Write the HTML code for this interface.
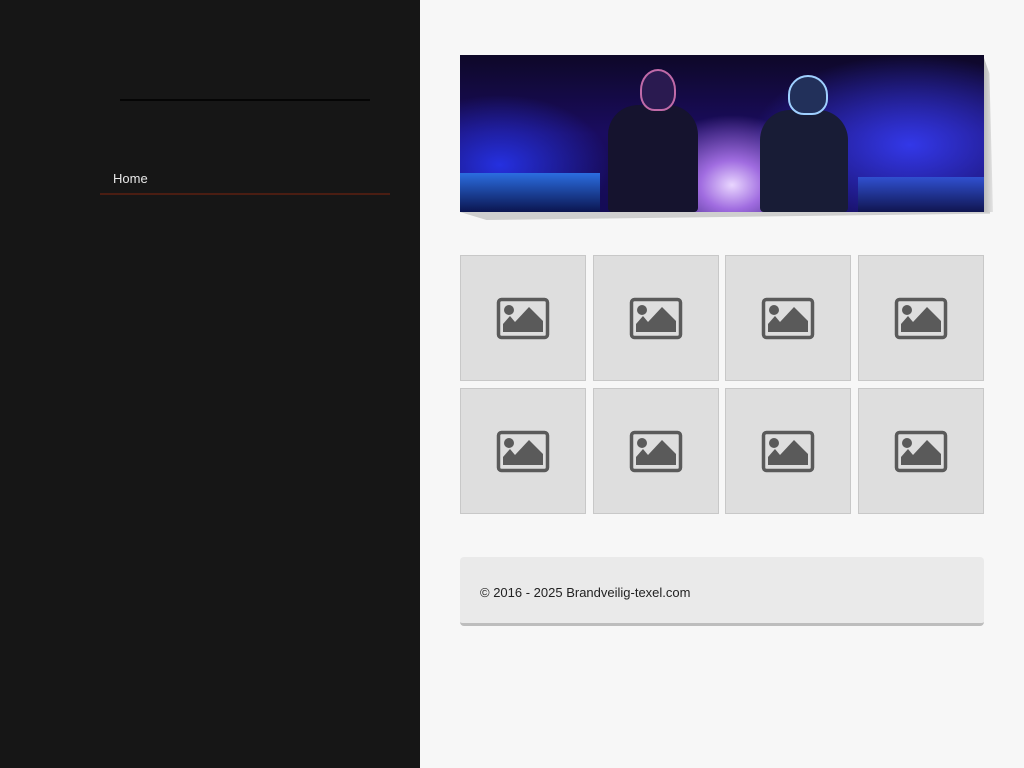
<!DOCTYPE html>
<html><head><meta charset="utf-8"><style>
*{margin:0;padding:0;box-sizing:border-box}
body{width:1024px;height:768px;overflow:hidden;background:#f7f7f7;font-family:"Liberation Sans",sans-serif;position:relative}
#side{position:absolute;left:0;top:0;width:420px;height:768px;background:#161616}
#side .ln{position:absolute;left:120px;top:99px;width:250px;height:2px;background:#050505}
#side .home{position:absolute;left:113px;top:171px;color:#e8e8e8;font-size:13px}
#side .ul{position:absolute;left:100px;top:193px;width:290px;height:2px;background:#4a1d12}
#ban{position:absolute;left:460px;top:55px;width:524px;height:157px;overflow:hidden;
background:radial-gradient(ellipse 90px 70px at 272px 130px,#e9d6ff 0%,#a06ce0 35%,rgba(90,40,200,0) 100%),
radial-gradient(ellipse 160px 90px at 450px 90px,#3338e8 0%,rgba(30,20,160,0) 100%),
radial-gradient(ellipse 110px 70px at 40px 110px,#2530e0 0%,rgba(30,20,160,0) 100%),
linear-gradient(180deg,#0e0828 0%,#1a0c60 50%,#140b55 100%)}
.shr{position:absolute;left:984px;top:58px;width:9px;height:154px;background:linear-gradient(90deg,#bbb,#e4e4e4);clip-path:polygon(0 0,60% 10%,100% 100%,0 100%)}
.shb{position:absolute;left:460px;top:212px;width:530px;height:8px;background:#cfcfcf;clip-path:polygon(0 0,100% 0,100% 20%,5% 100%)}
.fig{position:absolute;background:#15132e;border-radius:30px 30px 4px 4px}
.t{position:absolute;width:126px;height:126px;background:#dedede;border:1px solid #c8c8c8}
.t svg{position:absolute;left:35px;top:41px}
#foot{position:absolute;left:460px;top:557px;width:524px;height:69px;background:#eaeaea;border-radius:4px;border-bottom:3px solid #bdbdbd;font-size:13px;color:#222;padding:28px 0 0 20px}
</style></head><body>
<div id="side"><div class="ln"></div><div class="home">Home</div><div class="ul"></div></div>
<div class="shr"></div><div class="shb"></div>
<div id="ban">
<div class="fig" style="left:148px;top:50px;width:90px;height:107px"></div>
<div style="position:absolute;left:180px;top:14px;width:36px;height:42px;border-radius:50% 50% 40% 40%;background:#2a1a50;border:2px solid #c06aa8"></div>
<div class="fig" style="left:300px;top:55px;width:88px;height:102px;background:#181c36"></div>
<div style="position:absolute;left:328px;top:20px;width:40px;height:40px;border-radius:50% 50% 40% 40%;background:#22305a;border:2px solid #9fd0ff"></div>
<div style="position:absolute;left:0;top:118px;width:140px;height:39px;background:linear-gradient(180deg,#2b6de0,#0b1550)"></div>
<div style="position:absolute;left:398px;top:122px;width:126px;height:35px;background:linear-gradient(180deg,#3050d0,#101550)"></div>
</div>
<div class="t" style="left:460px;top:255px"><svg width="54" height="44"><rect x="2.5" y="2.5" width="49" height="38" rx="3" fill="none" stroke="#5a5a5a" stroke-width="3.5"/><circle cx="13" cy="13" r="5" fill="#5a5a5a"/><path d="M7 35 L7 27 L14 19 L19 25 L33 10 L47 24 L47 35 Z" fill="#5a5a5a"/></svg></div>
<div class="t" style="left:593px;top:255px"><svg width="54" height="44"><rect x="2.5" y="2.5" width="49" height="38" rx="3" fill="none" stroke="#5a5a5a" stroke-width="3.5"/><circle cx="13" cy="13" r="5" fill="#5a5a5a"/><path d="M7 35 L7 27 L14 19 L19 25 L33 10 L47 24 L47 35 Z" fill="#5a5a5a"/></svg></div>
<div class="t" style="left:725px;top:255px"><svg width="54" height="44"><rect x="2.5" y="2.5" width="49" height="38" rx="3" fill="none" stroke="#5a5a5a" stroke-width="3.5"/><circle cx="13" cy="13" r="5" fill="#5a5a5a"/><path d="M7 35 L7 27 L14 19 L19 25 L33 10 L47 24 L47 35 Z" fill="#5a5a5a"/></svg></div>
<div class="t" style="left:858px;top:255px"><svg width="54" height="44"><rect x="2.5" y="2.5" width="49" height="38" rx="3" fill="none" stroke="#5a5a5a" stroke-width="3.5"/><circle cx="13" cy="13" r="5" fill="#5a5a5a"/><path d="M7 35 L7 27 L14 19 L19 25 L33 10 L47 24 L47 35 Z" fill="#5a5a5a"/></svg></div>
<div class="t" style="left:460px;top:388px"><svg width="54" height="44"><rect x="2.5" y="2.5" width="49" height="38" rx="3" fill="none" stroke="#5a5a5a" stroke-width="3.5"/><circle cx="13" cy="13" r="5" fill="#5a5a5a"/><path d="M7 35 L7 27 L14 19 L19 25 L33 10 L47 24 L47 35 Z" fill="#5a5a5a"/></svg></div>
<div class="t" style="left:593px;top:388px"><svg width="54" height="44"><rect x="2.5" y="2.5" width="49" height="38" rx="3" fill="none" stroke="#5a5a5a" stroke-width="3.5"/><circle cx="13" cy="13" r="5" fill="#5a5a5a"/><path d="M7 35 L7 27 L14 19 L19 25 L33 10 L47 24 L47 35 Z" fill="#5a5a5a"/></svg></div>
<div class="t" style="left:725px;top:388px"><svg width="54" height="44"><rect x="2.5" y="2.5" width="49" height="38" rx="3" fill="none" stroke="#5a5a5a" stroke-width="3.5"/><circle cx="13" cy="13" r="5" fill="#5a5a5a"/><path d="M7 35 L7 27 L14 19 L19 25 L33 10 L47 24 L47 35 Z" fill="#5a5a5a"/></svg></div>
<div class="t" style="left:858px;top:388px"><svg width="54" height="44"><rect x="2.5" y="2.5" width="49" height="38" rx="3" fill="none" stroke="#5a5a5a" stroke-width="3.5"/><circle cx="13" cy="13" r="5" fill="#5a5a5a"/><path d="M7 35 L7 27 L14 19 L19 25 L33 10 L47 24 L47 35 Z" fill="#5a5a5a"/></svg></div>
<div id="foot">© 2016 - 2025 Brandveilig-texel.com</div>
</body></html>
